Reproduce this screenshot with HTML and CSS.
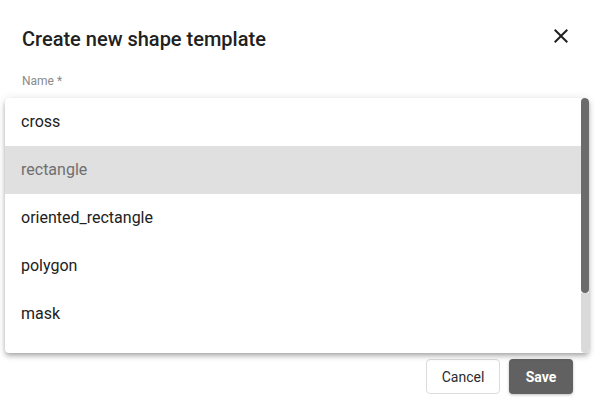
FILE: index.html
```html
<!DOCTYPE html>
<html>
<head>
<meta charset="utf-8">
<link rel="stylesheet" href="styles.css">
</head>
<body>
<div class="dialog">
  <div class="header">
    <h2 class="title">Create new shape template</h2>
    <button class="close" aria-label="Close">
      <svg width="24" height="24" viewBox="0 0 24 24"><path d="M19 6.41 17.59 5 12 10.59 6.41 5 5 6.41 10.59 12 5 17.59 6.41 19 12 13.41 17.59 19 19 17.59 13.41 12z" fill="#212121"/></svg>
    </button>
  </div>
  <div class="field">
    <label class="label">Name *</label>
    <div class="input"></div>
  </div>
  <div class="actions">
    <button class="btn cancel">Cancel</button>
    <button class="btn save">Save</button>
  </div>
</div>
<div class="menu">
  <ul class="options">
    <li class="option">cross</li>
    <li class="option active">rectangle</li>
    <li class="option">oriented_rectangle</li>
    <li class="option">polygon</li>
    <li class="option">mask</li>
    <li class="option"></li>
  </ul>
  <div class="scrollbar">
    <div class="thumb"></div>
    <div class="track"></div>
  </div>
</div>
</body>
</html>
```
FILE: styles.css
```css
html, body {
  margin: 0;
  padding: 0;
  background: #ffffff;
  width: 595px;
  height: 412px;
  overflow: hidden;
  font-family: Roboto, "Liberation Sans", Arial, sans-serif;
}
.dialog {
  padding: 23px 22px 0 22px;
  display: flex;
  flex-direction: column;
}
.header {
  display: flex;
  justify-content: space-between;
  align-items: flex-start;
}
.title {
  margin: 0;
  font-size: 20px;
  line-height: 32px;
  font-weight: 500;
  color: #212121;
}
.close {
  margin-top: 1px;
  width: 24px;
  height: 24px;
  padding: 0;
  border: 0;
  background: none;
  display: flex;
}
.field {
  margin-top: 18px;
  display: flex;
  flex-direction: column;
}
.label {
  font-size: 12px;
  line-height: 16px;
  color: #8a8a8a;
}
.input {
  height: 270px;
}
.actions {
  display: flex;
  justify-content: flex-end;
  gap: 9px;
}
.btn {
  height: 35px;
  border-radius: 4px;
  font-family: Roboto, "Liberation Sans", Arial, sans-serif;
  font-size: 14px;
  padding: 0;
}
.cancel {
  width: 74px;
  background: #ffffff;
  border: 1px solid #dcdcdc;
  color: #2b2b2b;
}
.save {
  width: 64px;
  background: #616161;
  border: 0;
  color: #ffffff;
  font-weight: 700;
  box-shadow: 0 1px 3px rgba(0,0,0,0.25);
}
.menu {
  position: absolute;
  left: 5px;
  top: 98px;
  width: 584px;
  height: 255px;
  background: #ffffff;
  border-radius: 4px;
  box-shadow: 0 2px 4px -1px rgba(0,0,0,0.2), 0 4px 5px 0 rgba(0,0,0,0.14), 0 1px 10px 0 rgba(0,0,0,0.12);
  display: flex;
  overflow: hidden;
}
.options {
  list-style: none;
  margin: 0;
  padding: 0;
  flex: 1;
}
.option {
  height: 48px;
  line-height: 48px;
  padding-left: 16px;
  font-size: 16px;
  color: #212121;
}
.option.active {
  background: #e0e0e0;
  color: #6f6f6f;
}
.scrollbar {
  width: 8px;
  display: flex;
  flex-direction: column;
}
.thumb {
  height: 195px;
  background: #6b6b6b;
  border-radius: 4px 4px 4px 4px;
}
.track {
  flex: 1;
  background: #dadada;
  border-radius: 0 0 4px 4px;
}
```
